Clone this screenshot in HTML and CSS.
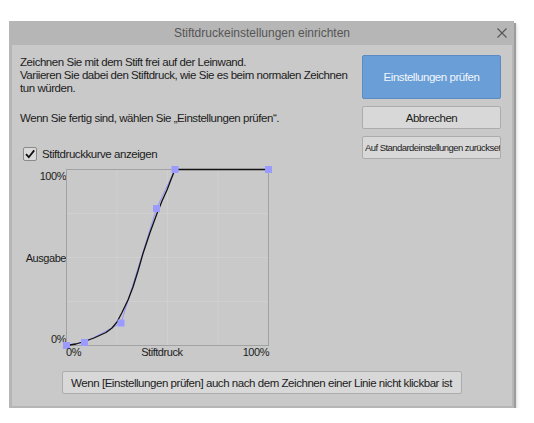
FILE: index.html
```html
<!DOCTYPE html>
<html>
<head>
  <title>Stiftdruckeinstellungen einrichten</title>
  <link rel="stylesheet" href="styles.css">
</head>
<body>
  <div class="dialog">
    <div class="titlebar">
      <span></span>
      <span class="title">Stiftdruckeinstellungen einrichten</span>
      <svg class="close" width="10" height="10" viewBox="0 0 10 10">
        <path d="M0.5 0.5 L9.5 9.5 M9.5 0.5 L0.5 9.5" stroke="#555" stroke-width="1.1" fill="none"/>
      </svg>
    </div>

    <div class="content">
      <div class="top">
        <div class="left">
          <p class="intro">Zeichnen Sie mit dem Stift frei auf der Leinwand.<br>
            Variieren Sie dabei den Stiftdruck, wie Sie es beim normalen Zeichnen<br>
            tun würden.</p>
          <p class="intro second">Wenn Sie fertig sind, wählen Sie „Einstellungen prüfen“.</p>

          <label class="checkrow">
            <span class="checkbox">
              <svg width="12" height="12" viewBox="0 0 12 12">
                <path d="M2 6.2 L4.8 9.2 L10.2 2.4" stroke="#111" stroke-width="1.8" fill="none"/>
              </svg>
            </span>
            <span>Stiftdruckkurve anzeigen</span>
          </label>

          <div class="graph">
            <div class="ylabels">
              <span>100%</span>
              <span>Ausgabe</span>
              <span>0%</span>
            </div>
            <svg class="plot" width="203" height="177" viewBox="0 0 203 177">
              <rect x="0.5" y="0.5" width="202" height="176" fill="none" stroke="#a2a2a2"/>
              <g stroke="#d0d0d0" stroke-width="1">
                <line x1="51" y1="1" x2="51" y2="176"/>
                <line x1="101.5" y1="1" x2="101.5" y2="176"/>
                <line x1="152" y1="1" x2="152" y2="176"/>
                <line x1="1" y1="44.5" x2="202" y2="44.5"/>
                <line x1="1" y1="88.5" x2="202" y2="88.5"/>
                <line x1="1" y1="132.5" x2="202" y2="132.5"/>
              </g>
              <polyline points="0.5,176 18.5,173.5 55,154 90.5,39.5 109,0.5 202.5,0.5"
                        fill="none" stroke="#9494ff" stroke-width="1"/>
              <polyline points="0.5,176.5 10,175 18,172.5 28,169 40,163.5 46,159 51,153 56,143.5 62,131 67,118 72,102 77,84.5 84,63.5 91,44.5 96,32 101,21 105,10.5 109,0.5 202.5,0.5"
                        fill="none" stroke="#111" stroke-width="1.3" stroke-linejoin="round"/>
              <g fill="#9a9aff">
                <rect x="-3" y="173" width="7" height="7"/>
                <rect x="15" y="170" width="7" height="7"/>
                <rect x="51.5" y="150.5" width="7" height="7"/>
                <rect x="87" y="36" width="7" height="7"/>
                <rect x="105.5" y="-3" width="7" height="7"/>
                <rect x="199" y="-3" width="7" height="7"/>
              </g>
            </svg>
            <span></span>
            <div class="xlabels">
              <span>0%</span>
              <span>Stiftdruck</span>
              <span>100%</span>
            </div>
          </div>
        </div>

        <div class="actions">
          <button class="btn btn-primary">Einstellungen prüfen</button>
          <button class="btn">Abbrechen</button>
          <button class="btn btn-small">Auf Standardeinstellungen zurücksetzen</button>
        </div>
      </div>

      <div class="footer">
        <button class="btn btn-wide">Wenn [Einstellungen prüfen] auch nach dem Zeichnen einer Linie nicht klickbar ist</button>
      </div>
    </div>
  </div>
</body>
</html>
```

FILE: styles.css
```css
body {
  margin: 0;
  background: #fff;
  font-family: "Liberation Sans", Arial, sans-serif;
  color: #1c1c1c;
}
.dialog {
  width: 505px;
  margin: 21px 0 0 9px;
  padding: 0 2px 2px 3px;
  box-sizing: border-box;
  background: #b6b6b6;
  box-shadow: 2px 2px 0 #9c9c9c, 3px 3px 3px rgba(0,0,0,0.15);
}
.titlebar {
  height: 24px;
  display: grid;
  grid-template-columns: 1fr auto 1fr;
  align-items: center;
}
.title {
  font-size: 12px;
  color: #555;
}
.close {
  justify-self: end;
  margin-right: 5px;
}
.content {
  background: #c9c9c9;
  padding: 10px 11px 12px 8px;
}
.top {
  display: grid;
  grid-template-columns: 1fr 139px;
}
.intro {
  margin: 1px 0 0;
  font-size: 11.5px;
  letter-spacing: -0.45px;
  line-height: 13px;
}
.intro.second {
  margin-top: 17px;
}
.checkrow {
  display: flex;
  align-items: center;
  gap: 5px;
  margin: 22px 0 0 3px;
  font-size: 11.5px;
  letter-spacing: -0.45px;
  line-height: 14px;
}
.checkbox {
  width: 12px;
  height: 12px;
  border: 1px solid #8a8a8a;
  border-radius: 2px;
  background: #dadada;
  display: flex;
  align-items: center;
  justify-content: center;
}
.graph {
  display: grid;
  grid-template-columns: 46px 203px;
  grid-template-rows: 177px 13px;
  margin-top: 8px;
  font-size: 11px;
  letter-spacing: -0.45px;
  line-height: 13px;
}
.ylabels {
  display: flex;
  flex-direction: column;
  justify-content: space-between;
  align-items: flex-end;
  padding-top: 1px;
}
.plot {
  overflow: visible;
}
.xlabels {
  display: flex;
  justify-content: space-between;
}
.actions {
  display: flex;
  flex-direction: column;
  gap: 7px;
}
.btn {
  height: 23px;
  padding: 0;
  border: 1px solid #acacac;
  border-radius: 2px;
  background: #d8d8d8;
  font-family: inherit;
  font-size: 11.5px;
  letter-spacing: -0.45px;
  color: #1c1c1c;
}
.btn-primary {
  height: 44px;
  background: #699ed6;
  border-color: #5a8bc2;
  color: #f2f6fb;
}
.btn-small {
  font-size: 9.5px;
  letter-spacing: -0.55px;
  text-align: left;
  padding-left: 2px;
  white-space: nowrap;
  overflow: hidden;
}
.footer {
  display: flex;
  justify-content: center;
  margin-top: 12px;
}
.btn-wide {
  width: 400px;
  margin-left: 2px;
}
```
